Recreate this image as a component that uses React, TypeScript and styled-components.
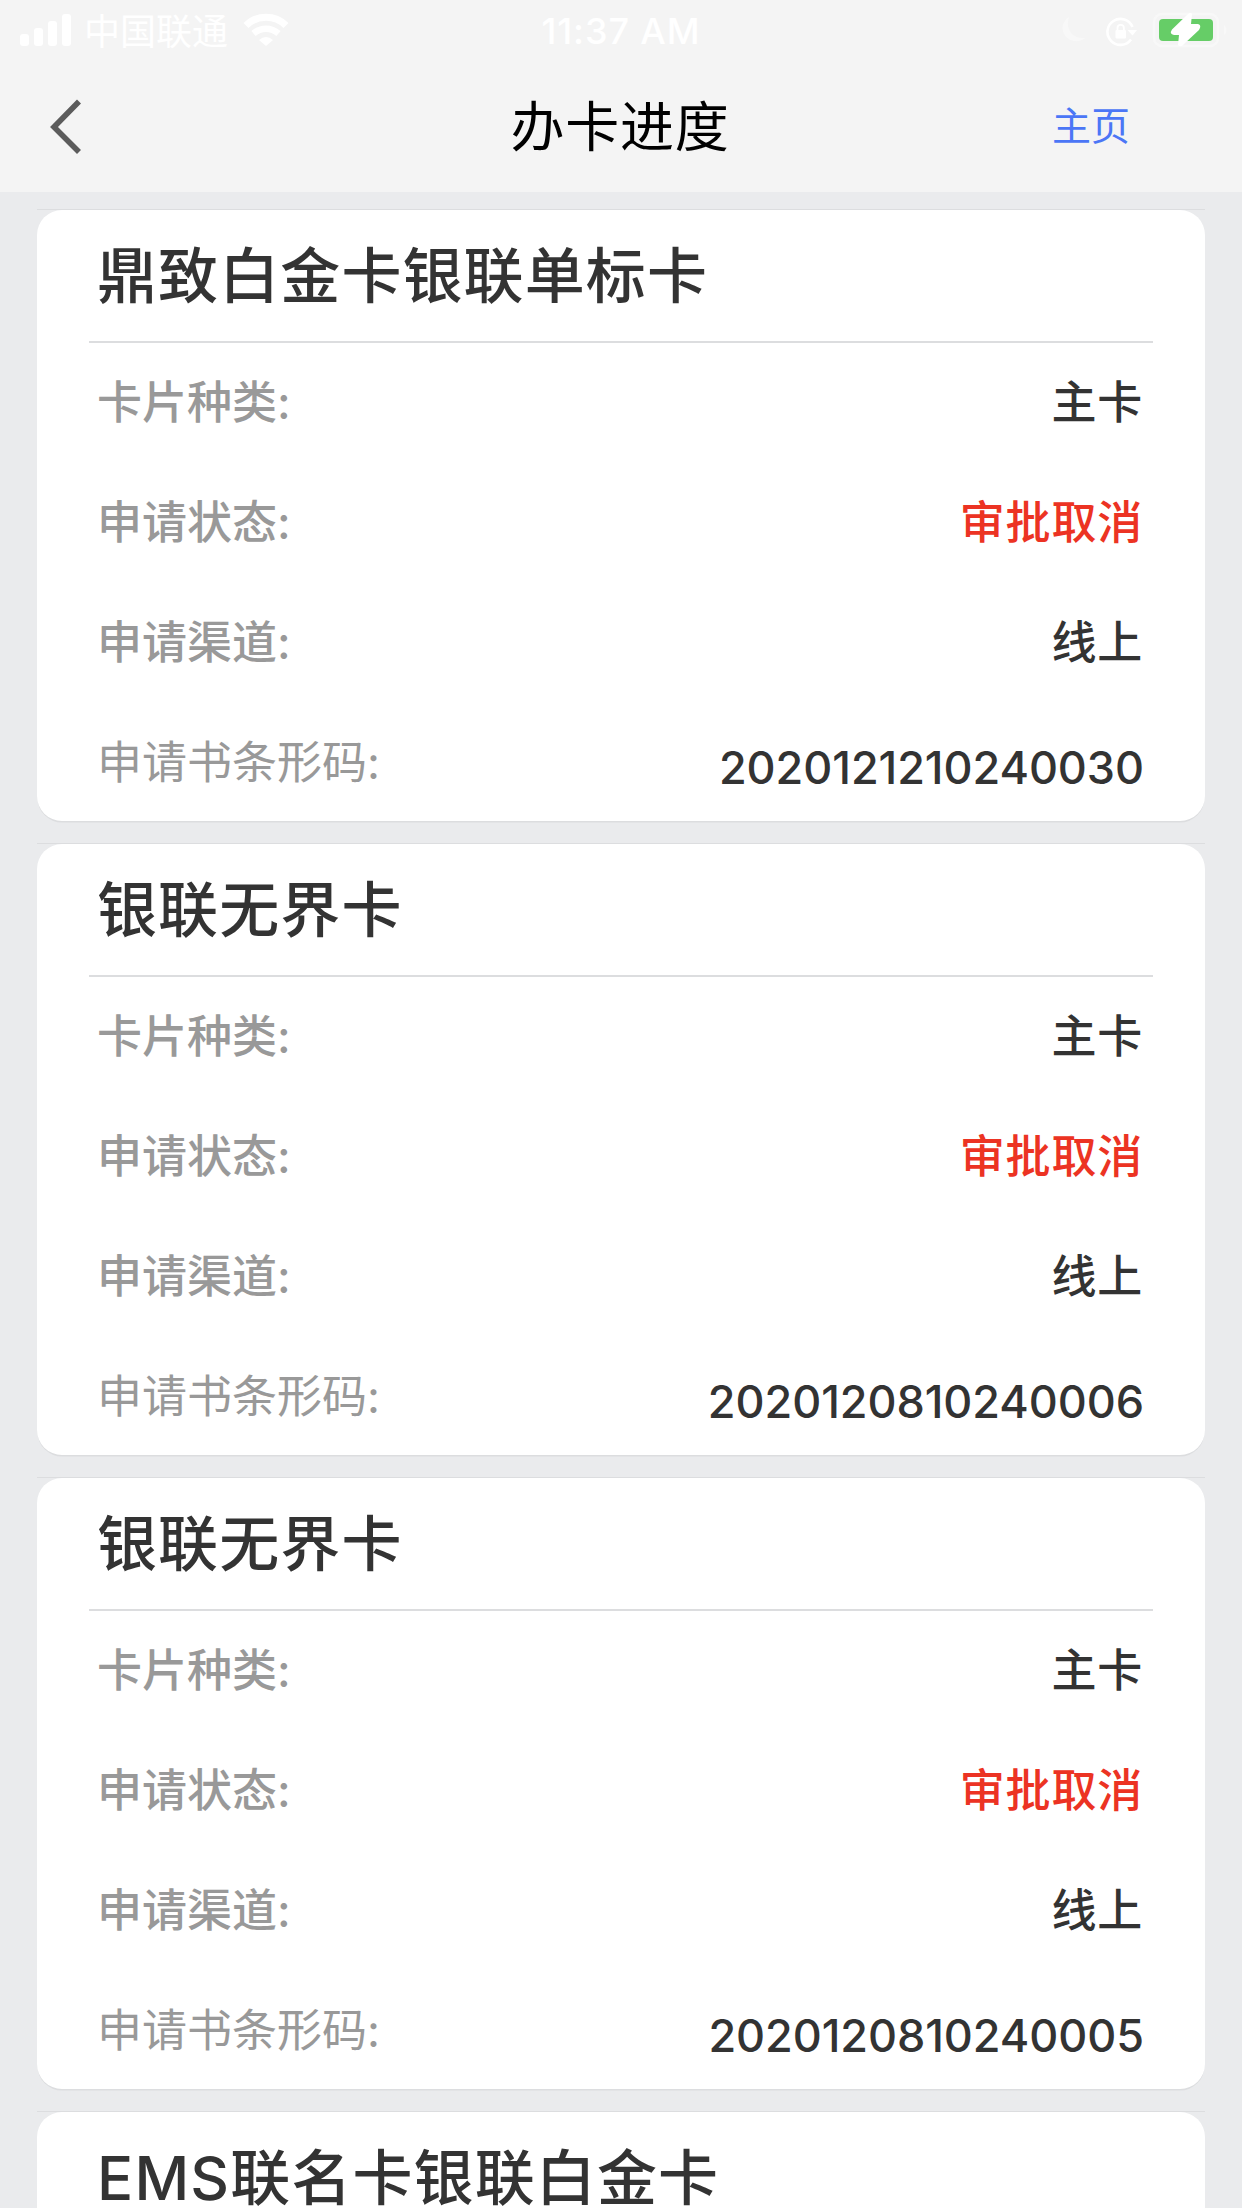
import React from "react";
import styled, { createGlobalStyle } from "styled-components";

const GlobalStyle = createGlobalStyle`
  body {
    margin: 0;
    background: #eaebed;
  }
  * {
    box-sizing: border-box;
  }
`;

const Screen = styled.div`
  width: 1242px;
  height: 2208px;
  overflow: hidden;
  background: #eaebed;
  color: #333;
  font-family: Inter, "Noto Sans CJK SC", sans-serif;
`;

const TopArea = styled.header`
  height: 192px;
  background: #f4f4f4;
`;

const StatusBar = styled.div`
  display: grid;
  grid-template-columns: 1fr auto 1fr;
  align-items: center;
  height: 60px;
  padding: 0 12px 0 20px;
  color: #fff;
`;

const StatusGroup = styled.div<{ $end?: boolean }>`
  display: flex;
  align-items: center;
  justify-content: ${(p) => (p.$end ? "flex-end" : "flex-start")};
  height: 60px;
`;

const Carrier = styled.span`
  margin: 3px 15px 0 12px;
  font-size: 36px;
  line-height: 60px;
`;

const Clock = styled.span`
  height: 60px;
  padding-right: 8px;
  font-size: 36px;
  font-weight: 500;
  line-height: 62px;
  letter-spacing: 0.9px;
`;

const MoonSlot = styled.span`
  display: flex;
  margin-right: 20px;
`;

const LockSlot = styled.span`
  display: flex;
  margin: 3px 14px 0 0;
`;

const NavBar = styled.nav`
  display: grid;
  grid-template-columns: 1fr auto 1fr;
  align-items: center;
  height: 132px;
  padding: 0 112px 0 49px;
`;

const BackButton = styled.button`
  display: flex;
  padding: 1px 0 0;
  border: 0;
  background: none;
`;

const PageTitle = styled.h1`
  margin: 4px 0 0 61px;
  color: #000;
  font-size: 54px;
  font-weight: 400;
  line-height: 80px;
  letter-spacing: 0.7px;
`;

const HomeLink = styled.a`
  justify-self: end;
  color: #4b76f6;
  font-size: 39px;
  line-height: 60px;
`;

const CardList = styled.main`
  display: flex;
  flex-direction: column;
  gap: 22px;
  padding: 17px 37px 0;
`;

const Card = styled.article`
  flex: none;
  height: 612px;
  border-top: 1px solid #dcdddf;
  background: #eaebed;
`;

const CardBody = styled.div`
  height: 611px;
  padding: 0 52px;
  border-radius: 25px;
  background: #fff;
  box-shadow: 0 2px 0 -0.5px #dcdddf;
`;

const CardTitle = styled.h2`
  height: 133px;
  margin: 0;
  padding: 20px 0 0 8px;
  border-bottom: 2px solid #dcdddf;
  font-size: 60px;
  font-weight: 500;
  line-height: 92px;
  letter-spacing: 1.1px;
  white-space: nowrap;
`;

const Latin = styled.span`
  font-size: 60px;
  letter-spacing: 1.2px;
`;

const Fields = styled.dl`
  margin: 0;
  padding: 0 10px 0 8px;
`;

const Field = styled.div`
  display: flex;
  justify-content: space-between;
  align-items: center;
  height: 120px;
`;

const Label = styled.dt<{ $light?: boolean }>`
  color: #999;
  font-size: 45px;
  font-weight: ${(p) => (p.$light ? 400 : 500)};
  line-height: 60px;
`;

const Value = styled.dd<{ $alert?: boolean }>`
  margin: 0;
  color: ${(p) => (p.$alert ? "#ec3323" : "#333")};
  font-size: 45px;
  font-weight: 500;
  line-height: 60px;
  letter-spacing: 0.8px;
`;

const Barcode = styled(Value)`
  margin-right: -1px;
  padding-top: 10px;
  letter-spacing: -0.06px;
`;

const SignalIcon = () => (
  <svg width="52" height="34" viewBox="0 0 52 34" fill="#fff">
    <rect x="0" y="21" width="9" height="12" rx="3" />
    <rect x="14" y="15" width="9" height="18" rx="3" />
    <rect x="28" y="8" width="9" height="25" rx="3" />
    <rect x="42" y="1" width="9" height="32" rx="3" />
  </svg>
);

const WifiIcon = () => (
  <svg width="46" height="34" viewBox="0 0 46 34" fill="none">
    <path d="M3 12.5C14 1.5 32 1.5 43 12.5" stroke="#fff" strokeWidth="7" />
    <path d="M10.5 20.5C18 14 28 14 35.5 20.5" stroke="#fff" strokeWidth="6.5" />
    <path d="M16 27Q23 21 30 27L23 33Z" fill="#fff" />
  </svg>
);

const MoonIcon = () => (
  <svg width="24" height="28" viewBox="0 0 24 28">
    <path d="M7 1C1 5-1 12 2 18C6 25 16 28 23 22C10 23 3 13 7 1Z" fill="#f8f8f8" />
  </svg>
);

const RotationLockIcon = () => (
  <svg width="32" height="30" viewBox="0 0 32 30" fill="none">
    <path d="M25 22.5A13 13 0 1 1 26.5 10" stroke="#fff" strokeWidth="2.6" />
    <path d="M21.5 13H31L26.5 18.5Z" fill="#fff" />
    <rect x="9.5" y="13" width="10.5" height="8.5" rx="1" fill="#fff" />
    <path d="M11.5 14V11a3.2 3.2 0 0 1 6.4 0v3" stroke="#fff" strokeWidth="1.8" />
  </svg>
);

const BatteryIcon = () => (
  <svg width="78" height="36" viewBox="0 0 78 36" fill="none">
    <rect x="2" y="2" width="64" height="32" rx="8" stroke="#f8f8f8" strokeWidth="2.5" />
    <path d="M72 13C75 15 75 21 72 23Z" fill="#f8f8f8" />
    <rect x="7" y="7" width="54" height="22" rx="4" fill="#66cd67" />
    <path
      d="M36 2L20 17.5Q17 22 22 23H27L26 33Q29 36 32 32L47 18Q50 13 46 12H39L40 2Q39 0 36 2Z"
      fill="#fff"
    />
  </svg>
);

const BackIcon = () => (
  <svg width="33" height="56" viewBox="0 0 33 56" fill="none">
    <path d="M30 2.5L5 28L30 53" stroke="#5c5c5c" strokeWidth="5.6" />
  </svg>
);

interface Application {
  prefix?: string;
  name: string;
  barcode?: string;
}

const applications: Application[] = [
  { name: "鼎致白金卡银联单标卡", barcode: "2020121210240030" },
  { name: "银联无界卡", barcode: "2020120810240006" },
  { name: "银联无界卡", barcode: "2020120810240005" },
  { prefix: "EMS", name: "联名卡银联白金卡" },
];

const ApplicationCard = ({ prefix, name, barcode }: Application) => (
  <Card>
    <CardBody>
      <CardTitle>
        {prefix && <Latin>{prefix}</Latin>}
        {name}
      </CardTitle>
      {barcode && (
        <Fields>
          <Field>
            <Label>卡片种类:</Label>
            <Value>主卡</Value>
          </Field>
          <Field>
            <Label>申请状态:</Label>
            <Value $alert>审批取消</Value>
          </Field>
          <Field>
            <Label>申请渠道:</Label>
            <Value>线上</Value>
          </Field>
          <Field>
            <Label $light>申请书条形码:</Label>
            <Barcode>{barcode}</Barcode>
          </Field>
        </Fields>
      )}
    </CardBody>
  </Card>
);

export default function App() {
  return (
    <Screen lang="zh-CN">
      <GlobalStyle />
      <TopArea>
        <StatusBar>
          <StatusGroup>
            <SignalIcon />
            <Carrier>中国联通</Carrier>
            <WifiIcon />
          </StatusGroup>
          <Clock>11:37 AM</Clock>
          <StatusGroup $end>
            <MoonSlot>
              <MoonIcon />
            </MoonSlot>
            <LockSlot>
              <RotationLockIcon />
            </LockSlot>
            <BatteryIcon />
          </StatusGroup>
        </StatusBar>
        <NavBar>
          <BackButton aria-label="返回">
            <BackIcon />
          </BackButton>
          <PageTitle>办卡进度</PageTitle>
          <HomeLink>主页</HomeLink>
        </NavBar>
      </TopArea>
      <CardList>
        {applications.map((item, index) => (
          <ApplicationCard key={index} {...item} />
        ))}
      </CardList>
    </Screen>
  );
}
